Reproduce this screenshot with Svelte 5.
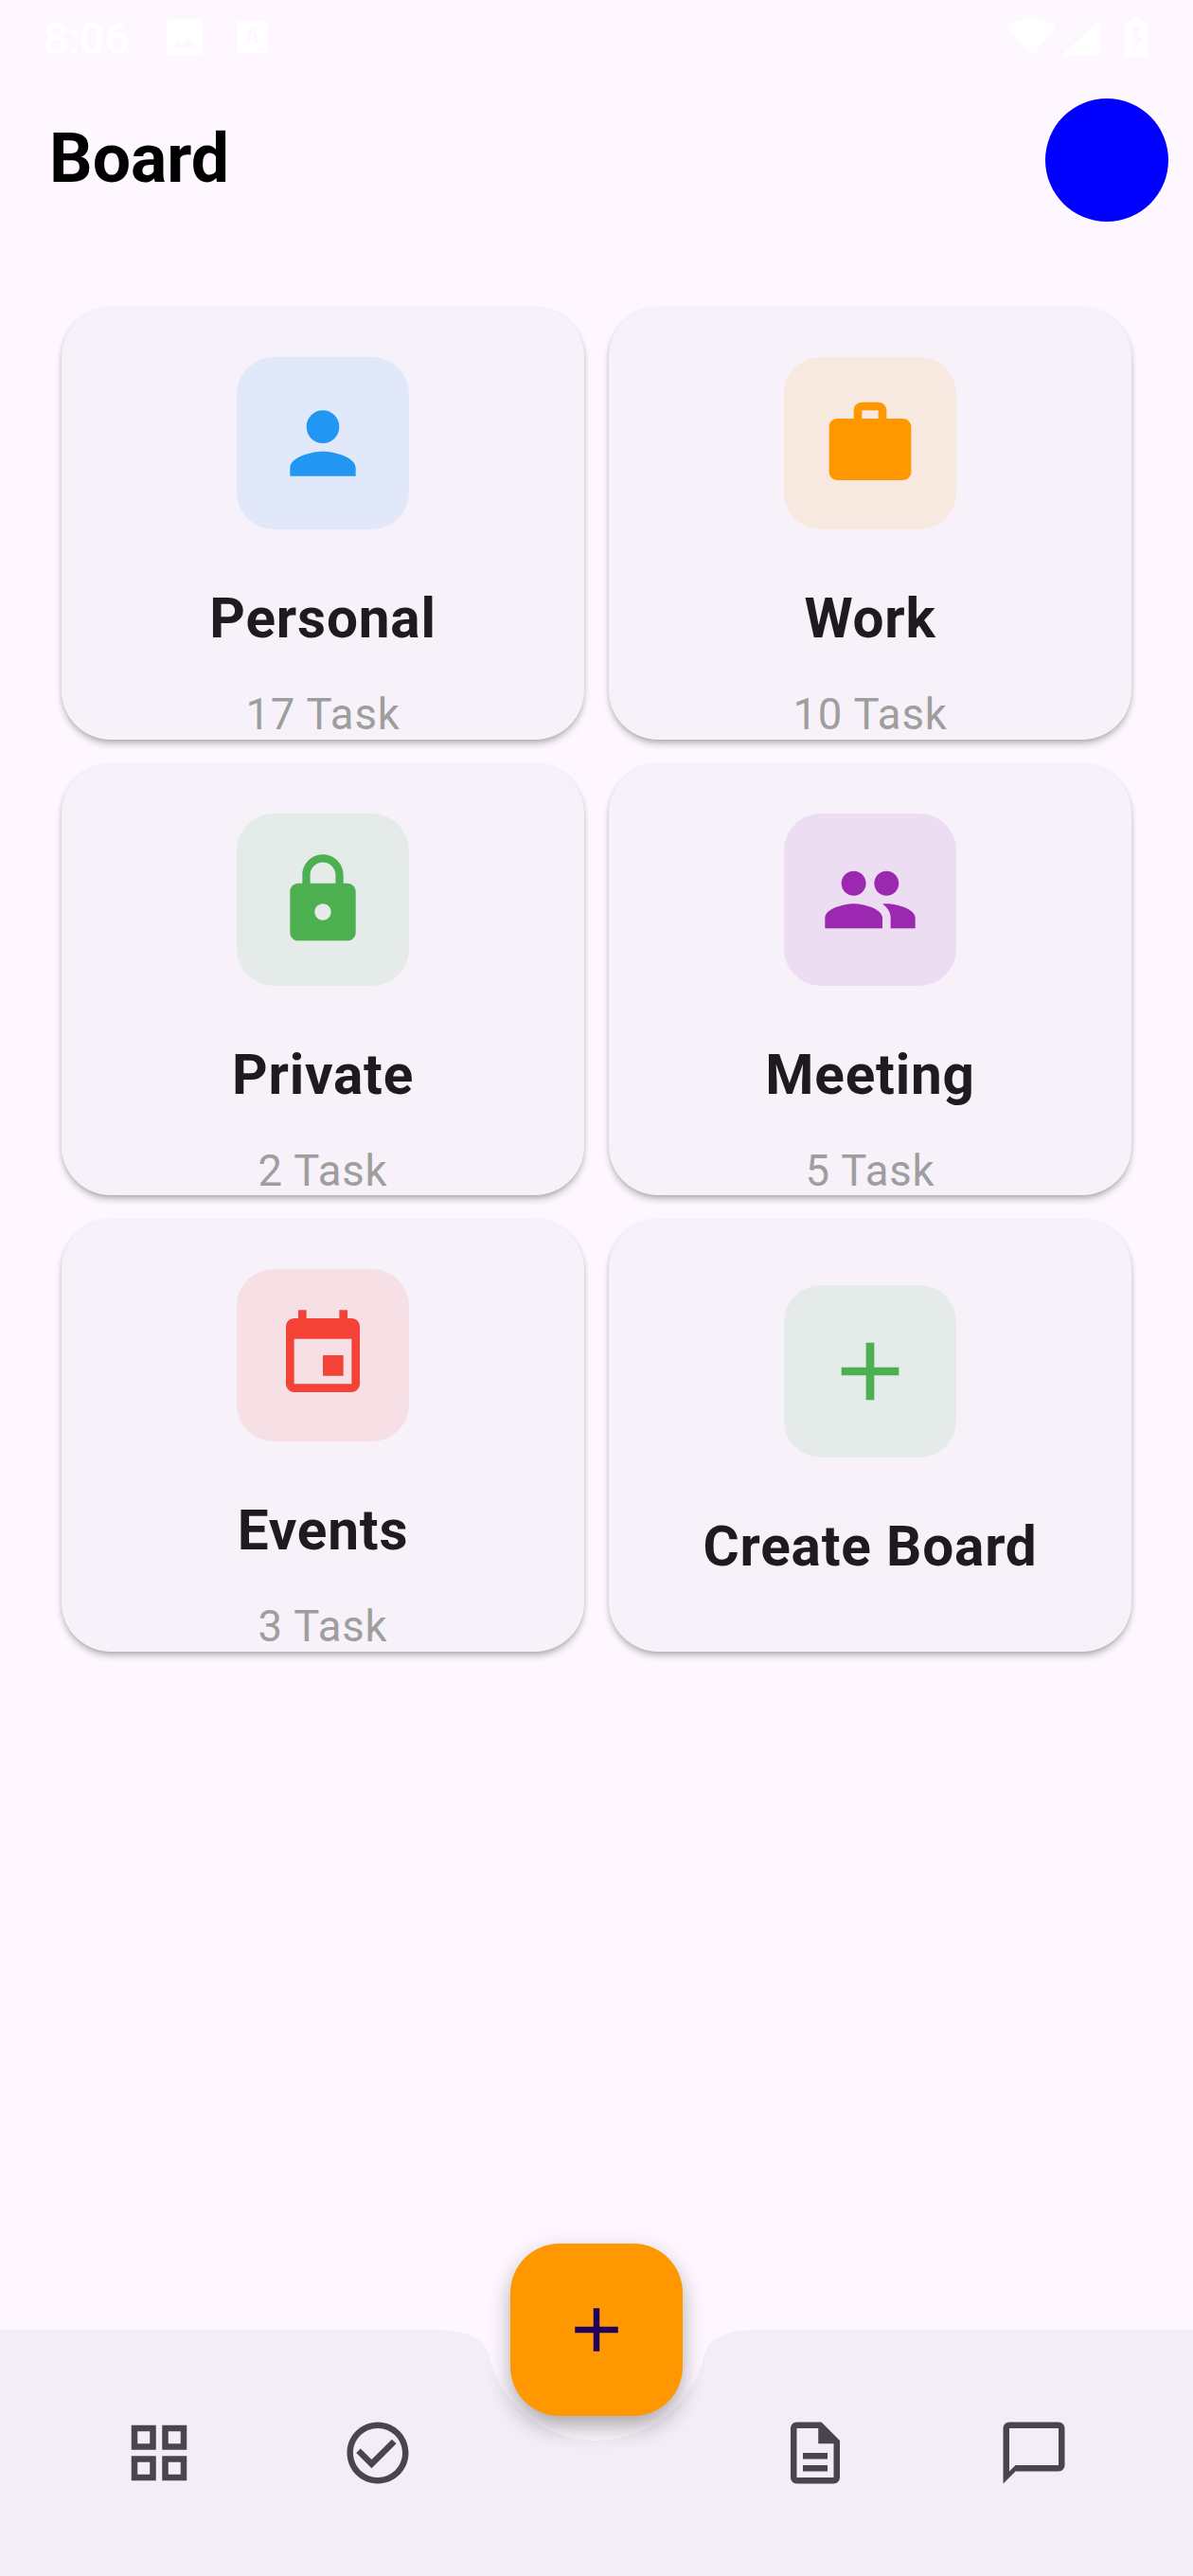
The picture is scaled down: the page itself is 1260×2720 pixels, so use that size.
<script>
  const addPath = 'M19 13h-6v6h-2v-6H5v-2h6V5h2v6h6v2z';

  const boards = [
    {
      title: 'Personal', count: '17 Task', tone: 'blue',
      icon: 'M12 12c2.21 0 4-1.79 4-4s-1.79-4-4-4-4 1.79-4 4 1.79 4 4 4zm0 2c-2.67 0-8 1.34-8 4v2h16v-2c0-2.66-5.33-4-8-4z'
    },
    {
      title: 'Work', count: '10 Task', tone: 'orange',
      icon: 'M20 6h-4V4c0-1.11-.89-2-2-2h-4c-1.11 0-2 .89-2 2v2H4c-1.11 0-1.99.89-1.99 2L2 19c0 1.11.89 2 2 2h16c1.11 0 2-.89 2-2V8c0-1.11-.89-2-2-2zm-6 0h-4V4h4v2z'
    },
    {
      title: 'Private', count: '2 Task', tone: 'green',
      icon: 'M18 8h-1V6c0-2.76-2.24-5-5-5S7 3.24 7 6v2H6c-1.1 0-2 .9-2 2v10c0 1.1.9 2 2 2h12c1.1 0 2-.9 2-2V10c0-1.1-.9-2-2-2zm-6 9c-1.1 0-2-.9-2-2s.9-2 2-2 2 .9 2 2-.9 2-2 2zm3.1-9H8.9V6c0-1.71 1.39-3.1 3.1-3.1 1.71 0 3.1 1.39 3.1 3.1v2z'
    },
    {
      title: 'Meeting', count: '5 Task', tone: 'purple',
      icon: 'M16 11c1.66 0 2.99-1.34 2.99-3S17.66 5 16 5c-1.66 0-3 1.34-3 3s1.34 3 3 3zm-8 0c1.66 0 2.99-1.34 2.99-3S9.66 5 8 5C6.34 5 5 6.34 5 8s1.34 3 3 3zm0 2c-2.33 0-7 1.17-7 3.5V19h14v-2.5c0-2.33-4.67-3.5-7-3.5zm8 0c-.29 0-.62.02-.97.05 1.16.84 1.97 1.97 1.97 3.45V19h6v-2.5c0-2.33-4.67-3.5-7-3.5z'
    },
    {
      title: 'Events', count: '3 Task', tone: 'red',
      icon: 'M17 12h-5v5h5v-5zM16 1v2H8V1H6v2H5c-1.11 0-1.99.9-1.99 2L3 19c0 1.1.89 2 2 2h14c1.1 0 2-.9 2-2V5c0-1.1-.9-2-2-2h-1V1h-2zm3 18H5V8h14v11z'
    },
    { title: 'Create Board', count: '', tone: 'green', icon: addPath }
  ];

  const tabs = [
    { label: 'Boards', icon: 'M3 3v8h8V3H3zm6 6H5V5h4v4zm-6 4v8h8v-8H3zm6 6H5v-4h4v4zm4-16v8h8V3h-8zm6 6h-4V5h4v4zm-6 4v8h8v-8h-8zm6 6h-4v-4h4v4z' },
    { label: 'Tasks', icon: 'M16.59 7.58L10 14.17l-3.59-3.58L5 12l5 5 8-8zM12 2C6.48 2 2 6.48 2 12s4.48 10 10 10 10-4.48 10-10S17.52 2 12 2zm0 18c-4.42 0-8-3.58-8-8s3.58-8 8-8 8 3.58 8 8-3.58 8-8 8z' },
    null,
    { label: 'Documents', icon: 'M8 16h8v2H8zm0-4h8v2H8zm6-10H6c-1.1 0-2 .9-2 2v16c0 1.1.89 2 1.99 2H18c1.1 0 2-.9 2-2V8l-6-6zm4 18H6V4h7v5h5v11z' },
    { label: 'Chat', icon: 'M20 2H4c-1.1 0-2 .9-2 2v18l4-4h14c1.1 0 2-.9 2-2V4c0-1.1-.9-2-2-2zm0 14H6l-2 2V4h16v12z' }
  ];
</script>

<div class="screen">
  <div class="status">
    <span class="time">8:06</span>
    <svg class="s-image" viewBox="0 0 38 38"><path fill-rule="evenodd" d="M4 0h30q4 0 4 4v30q0 4-4 4H4q-4 0-4-4V4q0-4 4-4zM6 31h26L24 20l-7 8-5-6z" /></svg>
    <svg class="s-lang" viewBox="0 0 32 34"><path fill-rule="evenodd" d="M3 0h26q3 0 3 3v28q0 3-3 3H3q-3 0-3-3V3q0-3 3-3zM13.700 8L8 24h3.500l1.300-4h5.400l1.300 4H23L17.300 8zM13.700 17l1.800-5.500L17.300 17zM17 29h2v2h-2zm5 0h2v2h-2zm5 0h2v2h-2z" /></svg>
    <span class="grow"></span>
    <svg class="s-wifi" viewBox="0 0 50 40"><path d="M1 8.500Q11 0 25 0t24 8.500q1 1 0 2.500L26.500 38.500q-1.500 1.500-3 0L1 11q-1-1.500 0-2.500z" /></svg>
    <svg class="s-signal" viewBox="0 0 39 38"><path d="M35.500 1Q39-1 39 2v36H2q-3-1-1-3z" /></svg>
    <svg class="s-battery" viewBox="0 0 24 42"><path fill-rule="evenodd" d="M7 0h10v5h5q2 0 2 2v33q0 2-2 2H2q-2 0-2-2V7q0-2 2-2h5zM9 11L8 24h4L9 37l10-16h-6l4-10z" /></svg>
  </div>

  <header>
    <h1>Board</h1>
    <div class="avatar"></div>
  </header>

  <main>
    {#each boards as board}
      <div class="cell">
        <article class="card" class:create={!board.count}>
          <div class="tile {board.tone}">
            <svg viewBox="0 0 24 24"><path d={board.icon} /></svg>
          </div>
          <h2>{board.title}</h2>
          {#if board.count}<p>{board.count}</p>{/if}
        </article>
      </div>
    {/each}
  </main>

  <nav>
    <svg class="bar" viewBox="0 0 1260 260">
      <path d="M0 0H461Q509.750 0 516.160 27A117 117 0 0 0 743.840 27Q750.250 0 799 0H1260V260H0Z" />
    </svg>
    {#each tabs as tab}
      {#if tab}
        <button class="tab" aria-label={tab.label}>
          <svg viewBox="0 0 24 24"><path d={tab.icon} /></svg>
        </button>
      {:else}
        <span></span>
      {/if}
    {/each}
    <button class="fab" aria-label="Add">
      <svg viewBox="0 0 24 24"><path d={addPath} /></svg>
    </button>
  </nav>
</div>

<style>
  :global(body) {
    margin: 0;
    background: #fef7ff;
  }
  .screen {
    width: 1260px;
    height: 2720px;
    display: flex;
    flex-direction: column;
    overflow: hidden;
    background: #fef7ff;
    font-family: Roboto, sans-serif;
  }
  h1, h2, p {
    margin: 0;
  }
  svg {
    display: block;
    fill: currentColor;
  }
  button {
    border: 0;
    padding: 0;
    background: none;
  }

  .status {
    height: 78px;
    flex: none;
    box-sizing: border-box;
    padding: 0 48px 0 46px;
    display: flex;
    align-items: center;
    color: #fff;
  }
  .time {
    width: 130px;
    font-size: 46px;
    font-weight: 500;
    line-height: 78px;
    padding-top: 3px;
  }
  .s-image { width: 38px; height: 38px; }
  .s-lang { width: 32px; height: 34px; margin-left: 37px; }
  .grow { flex: 1; }
  .s-wifi { width: 50px; height: 40px; }
  .s-signal { width: 39px; height: 38px; margin: 2px 26px 0 8px; }
  .s-battery { width: 24px; height: 42px; }

  header {
    height: 182px;
    flex: none;
    box-sizing: border-box;
    padding: 0 26px 0 52px;
    display: flex;
    align-items: center;
    justify-content: space-between;
  }
  h1 {
    padding-bottom: 2px;
    font-size: 71.5px;
    font-weight: 700;
    line-height: 90px;
    color: #000;
  }
  .avatar {
    width: 130px;
    height: 130px;
    border-radius: 50%;
    background: #00f;
  }

  main {
    flex: 1;
    padding: 52px;
    display: grid;
    grid-template-columns: 1fr 1fr;
    grid-auto-rows: 481.67px;
    align-content: start;
  }
  .cell {
    padding: 13px;
    display: flex;
  }
  .card {
    flex: 1;
    box-sizing: border-box;
    padding-top: 52px;
    display: flex;
    flex-direction: column;
    align-items: center;
    border-radius: 52px;
    background: #f7f2fa;
    box-shadow: 0 5px 9px -2px rgba(0, 0, 0, 0.32), 0 1px 5px rgba(0, 0, 0, 0.08);
  }
  .create {
    padding-top: 68.5px;
  }
  .tile {
    width: 182px;
    height: 182px;
    flex: none;
    display: grid;
    place-items: center;
    border-radius: 39px;
  }
  .tile svg {
    width: 104px;
    height: 104px;
  }
  .blue { color: #2196f3; background: rgba(33, 150, 243, 0.1); }
  .orange { color: #ff9800; background: rgba(255, 152, 0, 0.1); }
  .green { color: #4caf50; background: rgba(76, 175, 80, 0.1); }
  .purple { color: #9c27b0; background: rgba(156, 39, 176, 0.1); }
  .red { color: #f44336; background: rgba(244, 67, 54, 0.1); }
  h2 {
    margin-top: 50px;
    font-size: 58.5px;
    font-weight: 700;
    line-height: 88px;
    letter-spacing: 0.8125px;
    color: #1d1b20;
  }
  p {
    margin-top: 25px;
    font-size: 45.5px;
    line-height: 65px;
    letter-spacing: 0.8125px;
    color: #9e9e9e;
    height: 58px;
  }

  nav {
    position: relative;
    height: 260px;
    flex: none;
    box-sizing: border-box;
    padding: 0 52px;
    display: grid;
    grid-template-columns: repeat(5, 1fr);
    align-items: center;
    justify-items: center;
  }
  .bar {
    position: absolute;
    inset: 0;
    width: 1260px;
    height: 260px;
    color: #f3edf7;
  }
  .tab {
    position: relative;
    color: #49454f;
  }
  .tab svg, .fab svg {
    width: 78px;
    height: 78px;
  }
  .fab {
    position: absolute;
    top: -91px;
    left: 539px;
    width: 182px;
    height: 182px;
    display: grid;
    place-items: center;
    border-radius: 52px;
    background: #ff9800;
    color: #21005d;
    box-shadow: 0 14px 24px -3px rgba(0, 0, 0, 0.28), 0 4px 28px rgba(0, 0, 0, 0.1);
  }
</style>
